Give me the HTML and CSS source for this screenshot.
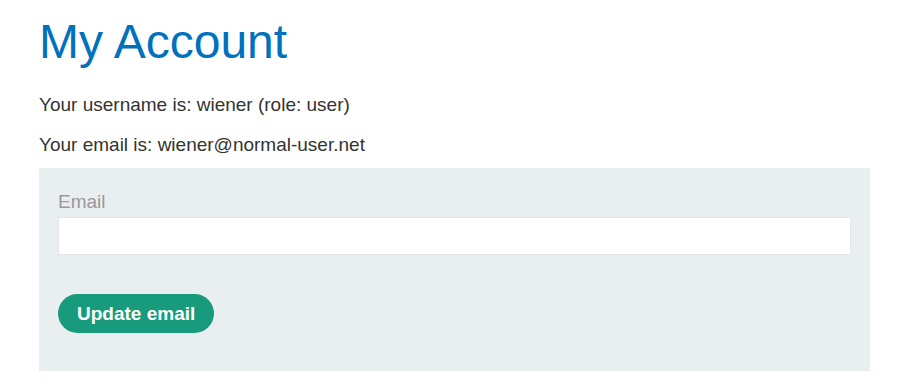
FILE: index.html
```html
<!DOCTYPE html>
<html lang="en">
<head>
  <meta charset="UTF-8">
  <title>My Account</title>
  <link rel="stylesheet" href="styles.css">
</head>
<body>
  <div class="container">
    <h1>My Account</h1>
    <p class="info first">Your username is: wiener (role: user)</p>
    <p class="info">Your email is: <span id="user-email">wiener@normal-user.net</span></p>
    <form class="login-form" id="change-email-form">
      <label for="email">Email</label>
      <input type="email" id="email" name="email">
      <button class="button" type="submit">Update email</button>
    </form>
  </div>
</body>
</html>
```

FILE: styles.css
```css
body {
  margin: 0;
  font-family: "Liberation Sans", Arial, sans-serif;
  background-color: #fff;
  color: #333332;
}

.container {
  padding: 0 39px;
}

h1 {
  margin: 0;
  padding-top: 14px;
  font-size: 48px;
  font-weight: normal;
  line-height: 56px;
  color: #0071bc;
}

.info {
  margin: 0;
  font-size: 19px;
  line-height: 40px;
}

.info.first {
  margin-top: 15px;
}

.login-form {
  display: flex;
  flex-direction: column;
  align-items: flex-start;
  background-color: #e9eef1;
  margin-top: 3px;
  padding: 22px 19px 38px;
  width: 831px;
  box-sizing: border-box;
}

label {
  font-size: 19px;
  line-height: 24px;
  color: #999;
}

input {
  width: 100%;
  height: 38px;
  box-sizing: border-box;
  border: 1px solid #e6e6e6;
  background: #fff;
  margin: 3px 0 0;
}

.button {
  margin-top: 39px;
  height: 39px;
  padding: 0 19px;
  border: none;
  border-radius: 20px;
  background-color: #179b7c;
  color: #fff;
  font-family: "Liberation Sans", Arial, sans-serif;
  font-weight: bold;
  font-size: 19px;
}
```
